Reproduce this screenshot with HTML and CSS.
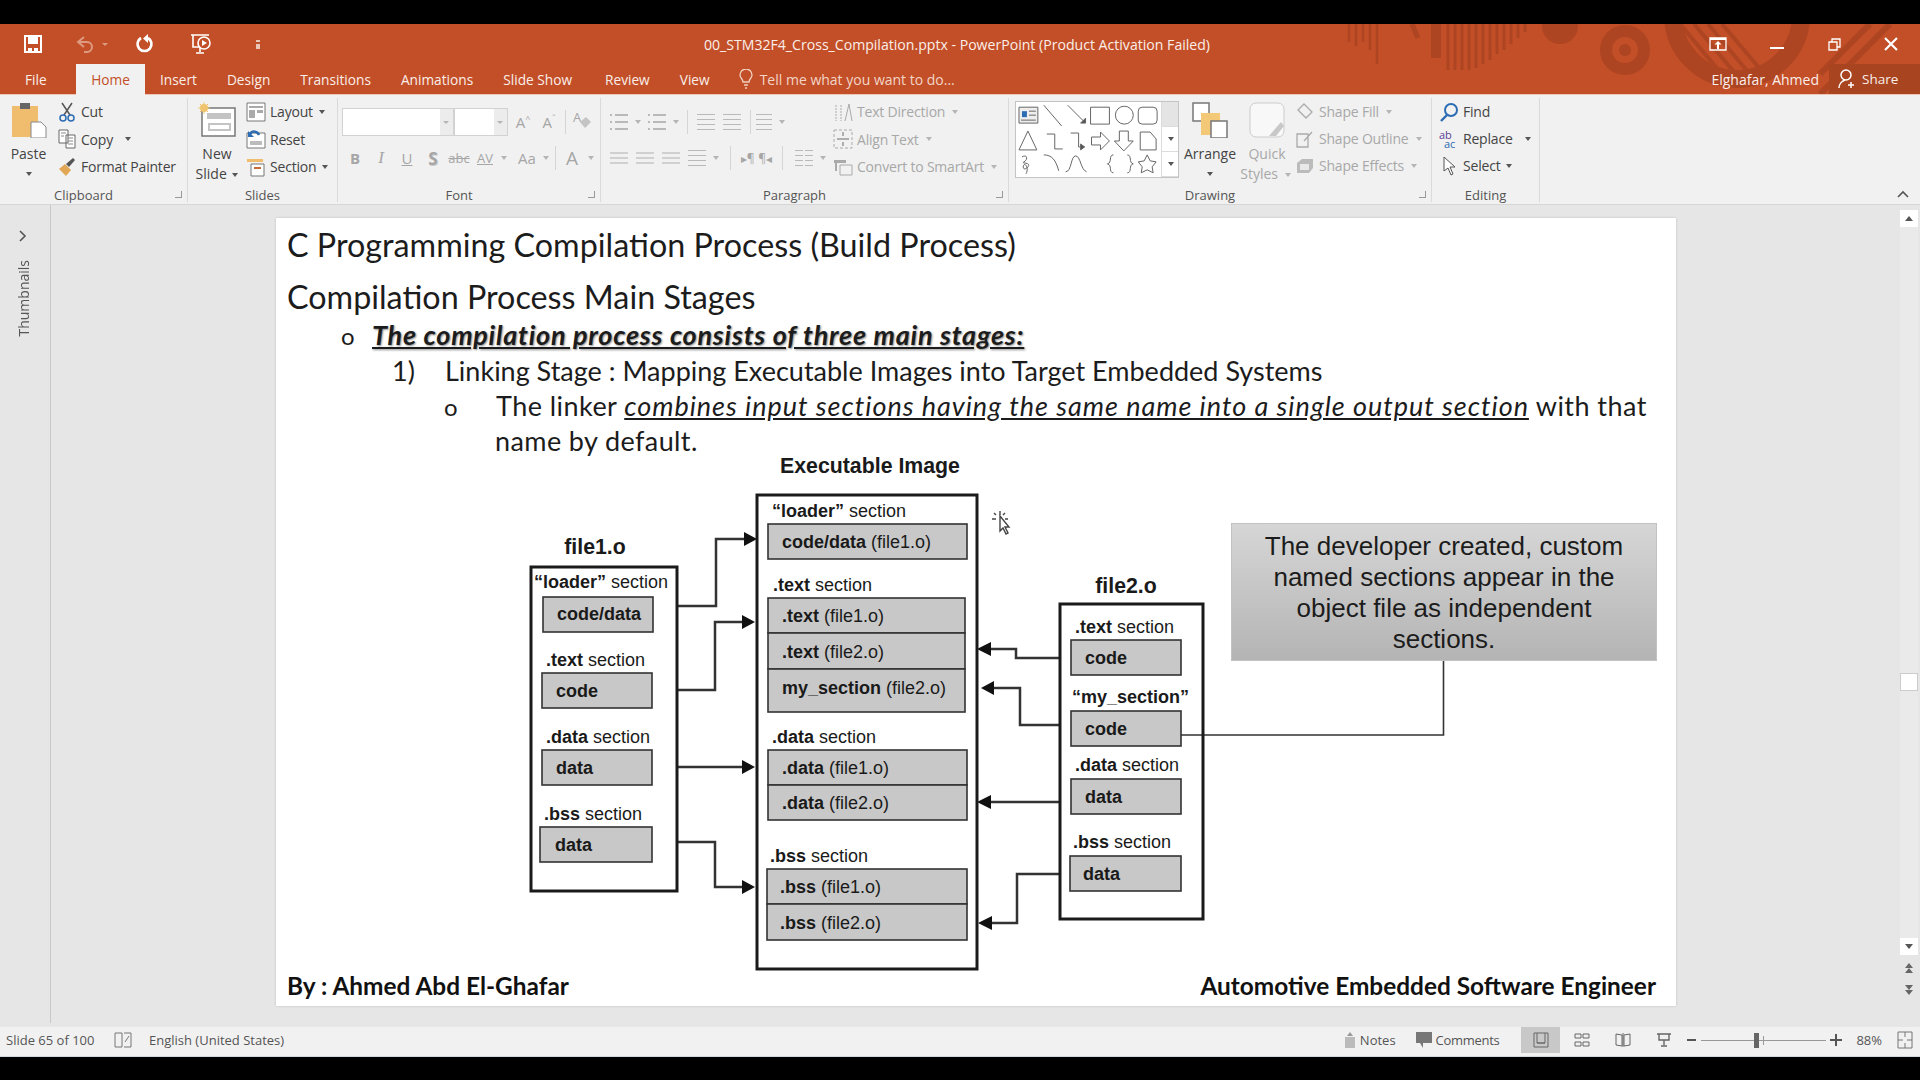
FILE: index.html
```html
<!DOCTYPE html>
<html lang="en">
<head>
  <meta charset="UTF-8" />
  <title>00_STM32F4_Cross_Compilation.pptx - PowerPoint</title>
  <link rel="stylesheet" href="styles.css">
</head>
<body>
  <div class="bar-black top"></div>

  <div class="chrome">
    <!-- Background art behind title bar and tabs, in page coordinates -->
    <svg class="title-art" width="580" height="70" viewBox="1340 24 580 70">
      <g fill="none" stroke="#ae4522">
        <path d="M1349 24v18M1356 24v22M1363 24v18M1370 24v26M1377 24v40" stroke-width="2.500"/>
        <path d="M1412 24l6 14" stroke-width="5"/>
        <path d="M1436 24v34" stroke-width="10"/>
        <path d="M1448 24v46M1455 24v46M1462 24v46M1469 24v46M1476 24v44M1483 24v40M1490 24v36M1497 24v30M1504 24v26M1511 24v20M1518 24v14M1525 24v8" stroke-width="3"/>
        <circle cx="1625" cy="50" r="19" stroke-width="12"/>
        <circle cx="1625" cy="50" r="6" fill="#ae4522" stroke="none"/>
        <circle cx="1737" cy="15" r="64" stroke-width="18"/>
        <path d="M1680 24l50 60M1694 24l50 60M1708 24l50 60M1722 24l44 52" stroke-width="4"/>
        <path d="M1890 24l-70 70M1870 24l-50 50" stroke-width="6"/>
      </g>
      <circle cx="1560" cy="26" r="18" fill="#ae4522"/>
    </svg>

    <!-- Title bar -->
    <header class="titlebar">
      <div class="qat">
        <svg class="qat-save" width="18" height="18" viewBox="0 0 18 18"><path d="M1 1h16v16H1z" fill="none" stroke="#fff" stroke-width="2"/><path d="M4 2h10v7H4zM4 13h4v3H4zM10 13h4v3h-4z" fill="#fff"/></svg>
        <svg class="qat-undo" width="20" height="18" viewBox="0 0 20 18"><path d="M8 2L2 7l6 5M2 7h9a5 5 0 0 1 0 10H8" fill="none" stroke="#de9a80" stroke-width="2"/></svg>
        <span class="caret-tiny faded"></span>
        <svg class="qat-redo" width="20" height="20" viewBox="0 0 20 20"><path d="M7 4a7 7 0 1 0 7 0" fill="none" stroke="#fff" stroke-width="2.600"/><path d="M14 0v9l-5-4.500z" fill="#fff"/></svg>
        <svg class="qat-show" width="24" height="24" viewBox="0 0 24 24"><path d="M2 3h18M4 3v12h14M11 15v5M7 21h8" fill="none" stroke="#fff" stroke-width="1.600"/><circle cx="15" cy="11" r="6" fill="#c24f27" stroke="#fff" stroke-width="1.600"/><path d="M13 8l5 3-5 3z" fill="#fff"/></svg>
        <span class="qat-more"></span>
      </div>
      <div class="doc-title">00_STM32F4_Cross_Compilation.pptx - PowerPoint (Product Activation Failed)</div>
      <div class="win-btns">
        <svg width="18" height="14" viewBox="0 0 18 14"><path d="M1 1h16v12H1z" fill="none" stroke="#fff" stroke-width="1.300"/><path d="M1 1h16v2H1zM9 4l-3.500 3.500H8V12h2V7.500h2.500z" fill="#fff"/></svg>
        <svg width="14" height="16" viewBox="0 0 14 16"><path d="M0 12h14" stroke="#fff" stroke-width="2"/></svg>
        <svg width="14" height="16" viewBox="0 0 14 16"><path d="M2 6h8v8H2zM5 6V3h8v8h-3" fill="none" stroke="#fff" stroke-width="1.300"/></svg>
        <svg width="14" height="16" viewBox="0 0 14 16"><path d="M1 2l12 12M13 2L1 14" stroke="#fff" stroke-width="2.200"/></svg>
      </div>
    </header>

    <!-- Ribbon tabs -->
    <nav class="tabs">
      <a class="tab tab-file">File</a>
      <a class="tab tab-home">Home</a>
      <a class="tab">Insert</a>
      <a class="tab">Design</a>
      <a class="tab">Transitions</a>
      <a class="tab">Animations</a>
      <a class="tab">Slide Show</a>
      <a class="tab tab-review">Review</a>
      <a class="tab">View</a>
      <a class="tell-me">
        <svg width="14" height="20" viewBox="0 0 14 20"><path d="M4 13c0-3-3-4-3-7a6 6 0 0 1 12 0c0 3-3 4-3 7zM5 16h4M6 19h2" fill="none" stroke="#f0d0c0" stroke-width="1.300"/></svg>
        Tell me what you want to do...
      </a>
      <span class="user">Elghafar, Ahmed</span>
      <a class="share">
        <svg width="18" height="20" viewBox="0 0 18 20"><circle cx="8" cy="6" r="5" fill="none" stroke="#fff" stroke-width="1.500"/><path d="M1 19c0-4 3-7 6-8M13 13v6M10 16h6" fill="none" stroke="#fff" stroke-width="1.500"/></svg>
        Share
      </a>
    </nav>
  </div>

  <!-- Ribbon -->
  <section class="ribbon">
    <div class="group g-clipboard">
      <div class="group-body">
        <div class="big">
          <svg width="36" height="36" viewBox="0 0 36 36"><path d="M1 4h26v31H1z" fill="#f0bd6e"/><path d="M9 1h10v6H9z" fill="#666"/><path d="M20 20h10l5 5v11H20z" fill="#fff" stroke="#888"/></svg>
          <span>Paste</span>
          <i class="caret big-caret"></i>
        </div>
        <div class="cmd-col">
          <div class="cmd">
            <svg width="18" height="20" viewBox="0 0 18 20"><path d="M4 1l8 12M14 1L6 13" stroke="#555" stroke-width="1.500"/><circle cx="5" cy="16" r="3" fill="none" stroke="#2b6cb3" stroke-width="1.500"/><circle cx="13" cy="16" r="3" fill="none" stroke="#2b6cb3" stroke-width="1.500"/></svg>
            Cut
          </div>
          <div class="cmd">
            <svg width="18" height="20" viewBox="0 0 18 20"><path d="M1 1h9v13H1zM8 6h9v13H8z" fill="#fff" stroke="#666"/><path d="M3 4h5M3 7h3M10 9h5M10 12h5M10 15h5" stroke="#888"/></svg>
            Copy <i class="caret sp"></i>
          </div>
          <div class="cmd">
            <svg width="18" height="20" viewBox="0 0 18 20"><path d="M1 12l6-5 6 6-5 6z" fill="#e2a755"/><path d="M8 7l7-6 2 2-6 7z" fill="#555"/></svg>
            Format Painter
          </div>
        </div>
      </div>
      <div class="group-label has-launcher">Clipboard<i class="launcher"></i></div>
    </div>

    <div class="group g-slides">
      <div class="group-body">
        <div class="big big-new">
          <svg width="38" height="36" viewBox="0 0 38 36"><path d="M4 6h33v28H4z" fill="#fff" stroke="#777" stroke-width="1.500"/><path d="M9 11h24v6H9z" fill="#c4c4c4"/><path d="M11 22h21v6H11z" fill="none" stroke="#c4c4c4" stroke-width="2"/><circle cx="6" cy="6" r="4" fill="#f0c46e"/><path d="M6 0v12M0 6h12M2 2l8 8M10 2l-8 8" stroke="#f0c46e"/></svg>
          <span>New</span>
          <span>Slide <i class="caret"></i></span>
        </div>
        <div class="cmd-col">
          <div class="cmd">
            <svg width="20" height="20" viewBox="0 0 20 20"><path d="M1 1h18v18H1z" fill="#fff" stroke="#777"/><path d="M3 4h14v2H3zM3 8h6v8H3zM11 8h6v3h-6z" fill="#aaa"/></svg>
            Layout <i class="caret"></i>
          </div>
          <div class="cmd">
            <svg width="20" height="20" viewBox="0 0 20 20"><path d="M1 4h18v15H1z" fill="#fff" stroke="#777"/><path d="M4 12h12v4H4z" fill="#bbb"/><path d="M4 5a5 5 0 0 1 9 1" fill="none" stroke="#2b6cb3" stroke-width="2.500"/><path d="M2 2v6h6z" fill="#2b6cb3"/></svg>
            Reset
          </div>
          <div class="cmd">
            <svg width="20" height="20" viewBox="0 0 20 20"><path d="M5 7h13v12H5z" fill="#fff" stroke="#777"/><path d="M8 11h7" stroke="#c86a3a" stroke-width="2"/><path d="M1 2h16v3H1z" fill="#f0bd6e"/></svg>
            Section <i class="caret"></i>
          </div>
        </div>
      </div>
      <div class="group-label">Slides</div>
    </div>

    <div class="group g-font">
      <div class="group-body font-body">
        <div class="tool-row first">
          <div class="combo w-font"><i class="combo-arrow"></i></div>
          <div class="combo w-size"><i class="combo-arrow"></i></div>
          <span class="tool grow">A<sup>^</sup></span>
          <span class="tool shrink">A<sup>ˇ</sup></span>
          <i class="sep"></i>
          <span class="tool clear">
            <svg width="20" height="22" viewBox="0 0 20 22"><text x="1" y="13" class="icon-a">A</text><path d="M8 13l6-5 5 5-6 6z" fill="#c4c4c4"/></svg>
          </span>
        </div>
        <div class="tool-row second">
          <span class="tool bold">B</span>
          <span class="tool ital">I</span>
          <span class="tool undl">U</span>
          <span class="tool bold shad">S</span>
          <span class="tool strike">abc</span>
          <span class="tool av">AV</span><i class="caret dim"></i>
          <span class="tool aa">Aa</span><i class="caret dim"></i>
          <i class="sep"></i>
          <span class="tool big-a">A</span><i class="caret dim"></i>
        </div>
      </div>
      <div class="group-label has-launcher">Font<i class="launcher"></i></div>
    </div>

    <div class="group g-para">
      <div class="group-body para-body">
        <div class="para-tools">
          <div class="tool-row first">
            <span class="lines-icon bullets"></span><i class="caret dim"></i>
            <span class="lines-icon bullets"></span><i class="caret dim"></i>
            <i class="sep"></i>
            <span class="lines-icon indent"></span>
            <span class="lines-icon indent"></span>
            <i class="sep"></i>
            <span class="lines-icon spacing"></span><i class="caret dim"></i>
          </div>
          <div class="tool-row second">
            <span class="lines-icon al-left"></span>
            <span class="lines-icon al-mid"></span>
            <span class="lines-icon al-right"></span>
            <span class="lines-icon"></span><i class="caret dim"></i>
            <i class="sep"></i>
            <span class="para-mark">▸¶</span>
            <span class="para-mark">¶◂</span>
            <i class="sep"></i>
            <span class="lines-icon cols"></span><i class="caret dim"></i>
          </div>
        </div>
        <div class="cmd-col off">
          <div class="cmd">
            <svg width="20" height="22" viewBox="0 0 20 22"><path d="M3 4v16M8 4v16" stroke="#aaa" stroke-dasharray="2 1"/><path d="M12 20L16 3l3 17" fill="none" stroke="#aaa"/></svg>
            Text Direction <i class="caret dim"></i>
          </div>
          <div class="cmd">
            <svg width="20" height="20" viewBox="0 0 20 20"><path d="M1 1h18v18H1z" fill="none" stroke="#aaa" stroke-dasharray="3 2"/><path d="M4 10h12M10 3v4M10 13v4" stroke="#999" stroke-width="1.500"/></svg>
            Align Text <i class="caret dim"></i>
          </div>
          <div class="cmd">
            <svg width="20" height="20" viewBox="0 0 20 20"><path d="M1 3h12v3H1z" fill="#aaa"/><path d="M7 8h12v10H7z" fill="none" stroke="#aaa"/><path d="M3 6v8" stroke="#aaa" stroke-width="2"/></svg>
            Convert to SmartArt <i class="caret dim"></i>
          </div>
        </div>
      </div>
      <div class="group-label has-launcher">Paragraph<i class="launcher"></i></div>
    </div>

    <div class="group g-draw">
      <div class="group-body draw-body">
        <div class="gallery">
          <svg width="146" height="75" viewBox="0 0 146 75" fill="none" stroke="#666" stroke-width="1">
            <path d="M3 5h19v16H3z" fill="#eee"/><path d="M6 9h5v6H6z" fill="#2b6cb3" stroke="none"/><path d="M13 9h7M13 13h7M5 18h15"/>
            <path d="M28 3l18 21M52 3l18 18"/><path d="M70 21l-5 0 5-5z" fill="#555"/>
            <path d="M75 5h19v17H75z"/><circle cx="109" cy="13" r="9"/><rect x="123" y="5" width="19" height="17" rx="4"/>
            <path d="M12 29L3 48h18zM31 32h8v15h8M55 31h8v14h6"/><path d="M69 45l-4-3v6z" fill="#555"/>
            <path d="M76 35h9v-5l9 9-9 9v-5h-9zM104 29h9v10h5l-9.500 10-9.500-10h5zM125 30h10l6 7v11h-16z"/>
            <path d="M6 55c6-3 6 3 2 5s8 0 4 5-6 0-4-2 5 5 2 9M28 53c8 0 12 5 15 16"/>
            <path d="M50 70c6 0 5-16 10-16s5 14 11 16M98 53c-5 0-1 8-6 9 5 1 1 9 6 9M112 53c5 0 1 8 6 9-5 1-1 9-6 9"/>
            <path d="M132 53l3 6 6 1-4 5 1 6-6-3-6 3 1-6-4-5 6-1z"/>
          </svg>
          <div class="gallery-scroll">
            <span class="up"></span><span class="down"><i class="caret"></i></span><span class="more"><i class="caret"></i></span>
          </div>
        </div>
        <div class="big big-arrange">
          <svg width="36" height="36" viewBox="0 0 36 36"><path d="M1 1h16v18H1z" fill="#fff" stroke="#777" stroke-width="1.500"/><path d="M9 11h19v22H9z" fill="#f3c877"/><path d="M19 19h16v17H19z" fill="#fff" stroke="#777" stroke-width="1.500"/></svg>
          <span>Arrange</span>
          <i class="caret big-caret"></i>
        </div>
        <div class="big big-quick off">
          <svg width="36" height="36" viewBox="0 0 36 36"><rect x="1" y="1" width="34" height="34" rx="6" fill="#f8f8f8" stroke="#ccc"/><path d="M20 34l12-14 3 4-8 10z" fill="#c8c8c8"/></svg>
          <span>Quick</span>
          <span>Styles <i class="caret dim"></i></span>
        </div>
        <div class="cmd-col off shape-col">
          <div class="cmd">
            <svg width="18" height="18" viewBox="0 0 18 18"><path d="M8 1l8 8-6 6-8-8z" fill="none" stroke="#aaa" stroke-width="1.300"/></svg>
            Shape Fill <i class="caret dim"></i>
          </div>
          <div class="cmd">
            <svg width="18" height="18" viewBox="0 0 18 18"><path d="M1 4h11v13H1zM8 11l8-9" fill="none" stroke="#aaa" stroke-width="1.300"/></svg>
            Shape Outline <i class="caret dim"></i>
          </div>
          <div class="cmd">
            <svg width="18" height="18" viewBox="0 0 18 18"><path d="M1 6l5-4h11v9l-4 5H1z" fill="#bbb"/><path d="M4 7h9v6H4z" fill="#e8e8e8"/></svg>
            Shape Effects <i class="caret dim"></i>
          </div>
        </div>
      </div>
      <div class="group-label has-launcher">Drawing<i class="launcher"></i></div>
    </div>

    <div class="group g-edit">
      <div class="group-body">
        <div class="cmd-col edit-col">
          <div class="cmd">
            <svg width="18" height="20" viewBox="0 0 18 20"><circle cx="11" cy="8" r="6" fill="none" stroke="#2b6cb3" stroke-width="2"/><path d="M7 13l-6 6" stroke="#2b6cb3" stroke-width="2.400"/></svg>
            Find
          </div>
          <div class="cmd">
            <span class="replace-icon"><b>ab</b><b class="ac">ac</b></span>
            Replace <i class="caret sp"></i>
          </div>
          <div class="cmd">
            <svg width="18" height="20" viewBox="0 0 18 20"><path d="M4 1v14l4-3 3 7 2-1-3-7h5z" fill="#fff" stroke="#555"/></svg>
            Select <i class="caret"></i>
          </div>
        </div>
      </div>
      <div class="group-label">Editing</div>
    </div>

    <svg class="collapse" width="12" height="8" viewBox="0 0 12 8"><path d="M1 7l5-5 5 5" fill="none" stroke="#555" stroke-width="1.600"/></svg>
  </section>

  <!-- Work area -->
  <main class="workspace">
    <aside class="thumbs">
      <svg width="8" height="12" viewBox="0 0 8 12"><path d="M1 1l5 5-5 5" fill="none" stroke="#555" stroke-width="1.600"/></svg>
      <span class="thumbs-text">Thumbnails</span>
    </aside>

    <div class="stage">
      <article class="slide">
        <h1 class="slide-title">C Programming Compilation Process (Build Process)</h1>
        <h2 class="slide-sub">Compilation Process Main Stages</h2>
        <p class="lvl1"><span class="bullet">o</span><b class="lead">The compilation process consists of three main stages:</b></p>
        <p class="lvl2"><span class="num">1)</span>Linking Stage : Mapping Executable Images into Target Embedded Systems</p>
        <p class="lvl3"><span class="bullet">o</span>The linker <em class="uline">combines input sections having the same name into a single output section</em> with that</p>
        <p class="lvl3 cont">name by default.</p>

        <!-- Diagram uses page coordinates through its viewBox -->
        <svg class="diagram" width="1400" height="788" viewBox="276 218 1400 788">
          <g class="wires">
            <path d="M677 606H716V539H746"/>
            <path d="M677 690H715V622H744"/>
            <path d="M677 767H744"/>
            <path d="M677 842H715V887H744"/>
            <path d="M1060 658H1016V649H990"/>
            <path d="M1060 725H1020V688H993"/>
            <path d="M1060 802H990"/>
            <path d="M1060 874H1017V923H990"/>
          </g>
          <path class="lead-line" d="M1181 735H1443.500V661"/>
          <g class="heads">
            <path d="M757 539l-13-7v14z"/>
            <path d="M755 622l-13-7v14z"/>
            <path d="M755 767l-13-7v14z"/>
            <path d="M755 887l-13-7v14z"/>
            <path d="M977 649l14-7v14z"/>
            <path d="M981 688l13-7v14z"/>
            <path d="M977 802l14-7v14z"/>
            <path d="M978 923l14-7v14z"/>
          </g>

          <g class="frames">
            <rect x="531" y="567" width="146" height="324"/>
            <rect x="757" y="495" width="220" height="474"/>
            <rect x="1060" y="604" width="143" height="315"/>
          </g>

          <g class="cells">
            <rect x="543" y="597" width="110" height="35"/>
            <rect x="542" y="673" width="110" height="35"/>
            <rect x="542" y="750" width="110" height="35"/>
            <rect x="540" y="827" width="112" height="35"/>
            <rect x="768" y="524" width="199" height="35"/>
            <rect x="768" y="598" width="197" height="35"/>
            <rect x="768" y="633" width="197" height="36"/>
            <rect x="768" y="669" width="197" height="43"/>
            <rect x="768" y="750" width="199" height="35"/>
            <rect x="768" y="785" width="199" height="35"/>
            <rect x="767" y="869" width="200" height="35"/>
            <rect x="767" y="904" width="200" height="36"/>
            <rect x="1071" y="640" width="110" height="35"/>
            <rect x="1071" y="711" width="110" height="35"/>
            <rect x="1071" y="779" width="110" height="35"/>
            <rect x="1070" y="856" width="111" height="35"/>
          </g>

          <text class="head" x="870" y="473" text-anchor="middle">Executable Image</text>
          <text class="head" x="595" y="554" text-anchor="middle">file1.o</text>
          <text class="head" x="1126" y="593" text-anchor="middle">file2.o</text>

          <text x="534" y="588"><tspan class="b">“loader”</tspan> section</text>
          <text class="b" x="557" y="620">code/data</text>
          <text x="546" y="666"><tspan class="b">.text</tspan> section</text>
          <text class="b" x="556" y="697">code</text>
          <text x="546" y="743"><tspan class="b">.data</tspan> section</text>
          <text class="b" x="556" y="774">data</text>
          <text x="544" y="820"><tspan class="b">.bss</tspan> section</text>
          <text class="b" x="555" y="851">data</text>

          <text x="772" y="517"><tspan class="b">“loader”</tspan> section</text>
          <text x="782" y="548"><tspan class="b">code/data</tspan> (file1.o)</text>
          <text x="773" y="591"><tspan class="b">.text</tspan> section</text>
          <text x="782" y="622"><tspan class="b">.text</tspan> (file1.o)</text>
          <text x="782" y="658"><tspan class="b">.text</tspan> (file2.o)</text>
          <text x="782" y="694"><tspan class="b">my_section</tspan> (file2.o)</text>
          <text x="772" y="743"><tspan class="b">.data</tspan> section</text>
          <text x="782" y="774"><tspan class="b">.data</tspan> (file1.o)</text>
          <text x="782" y="809"><tspan class="b">.data</tspan> (file2.o)</text>
          <text x="770" y="862"><tspan class="b">.bss</tspan> section</text>
          <text x="780" y="893"><tspan class="b">.bss</tspan> (file1.o)</text>
          <text x="780" y="929"><tspan class="b">.bss</tspan> (file2.o)</text>

          <text x="1075" y="633"><tspan class="b">.text</tspan> section</text>
          <text class="b" x="1085" y="664">code</text>
          <text class="b" x="1072" y="703">“my_section”</text>
          <text class="b" x="1085" y="735">code</text>
          <text x="1075" y="771"><tspan class="b">.data</tspan> section</text>
          <text class="b" x="1085" y="803">data</text>
          <text x="1073" y="848"><tspan class="b">.bss</tspan> section</text>
          <text class="b" x="1083" y="880">data</text>

          <!-- Mouse pointer left in the recording -->
          <g class="pointer">
            <path d="M1000 511v4M992 519h4M1005 519h3M994 513l2 2M1005 513l-2 2" />
            <path class="arrow" d="M1000 516v15l3-3 3 6 2-1-3-6h4z"/>
          </g>
        </svg>

        <div class="callout">The developer created, custom named sections appear in the object file as independent sections.</div>

        <footer class="slide-foot">
          <b>By : Ahmed Abd El-Ghafar</b>
          <b>Automotive Embedded Software Engineer</b>
        </footer>
      </article>
    </div>

    <aside class="vscroll">
      <span class="vbtn"><i class="tri-up"></i></span>
      <span class="vtrack"><span class="vthumb"></span></span>
      <span class="vbtn"><i class="tri-down"></i></span>
      <span class="vjump">
        <svg width="12" height="12" viewBox="0 0 12 12"><path d="M6 0l4 5H2zM6 5l4 5H2z" fill="#666"/></svg>
        <svg width="12" height="12" viewBox="0 0 12 12"><path d="M6 12l4-5H2zM6 7l4-5H2z" fill="#666"/></svg>
      </span>
    </aside>
  </main>

  <!-- Status bar -->
  <footer class="statusbar">
    <span class="st-slide">Slide 65 of 100</span>
    <svg class="st-book" width="18" height="16" viewBox="0 0 18 16"><path d="M1 1h7v14H1zM10 1h7M10 15h7M17 1v14M11 10l4-6" fill="none" stroke="#777"/></svg>
    <span>English (United States)</span>
    <span class="st-right">
      <span class="st-item">
        <svg width="12" height="18" viewBox="0 0 12 18"><path d="M6 1l3 4H3z" fill="#999"/><path d="M1 6h10v11H1z" fill="#bbb"/></svg>
        Notes
      </span>
      <span class="st-item st-comments">
        <svg width="16" height="18" viewBox="0 0 16 18"><path d="M0 1h16v11H7v5l-3-5H0z" fill="#777"/></svg>
        Comments
      </span>
      <span class="view-btn on"><svg width="16" height="16" viewBox="0 0 16 16"><path d="M1 1h14v14H1zM4 1v10h8V1M4 11h8" fill="none" stroke="#666"/></svg></span>
      <span class="view-btn"><svg width="16" height="16" viewBox="0 0 16 16"><path d="M1 2h6v4H1zM9 2h6v4H9zM1 10h6v4H1zM9 10h6v4H9z" fill="none" stroke="#666"/></svg></span>
      <span class="view-btn"><svg width="16" height="16" viewBox="0 0 16 16"><path d="M1 2l6 1v11l-6-1zM15 2L9 3v11l6-1zM8 1v14" fill="none" stroke="#666"/></svg></span>
      <span class="view-btn"><svg width="16" height="16" viewBox="0 0 16 16"><path d="M1 2h14M3 2v6h10V2M8 8v5M5 14h6" fill="none" stroke="#666" stroke-width="1.400"/></svg></span>
      <span class="zoom-minus"></span>
      <span class="zoom-track"><i class="zoom-tick"></i><i class="zoom-thumb"></i></span>
      <span class="zoom-plus"></span>
      <span class="zoom-val">88%</span>
      <svg class="st-fit" width="16" height="18" viewBox="0 0 16 18"><path d="M1 1h14v16H1zM8 1v5M8 12v5M1 9h5M10 9h5" fill="none" stroke="#777"/></svg>
    </span>
  </footer>
  <div class="bar-black bottom"></div>
</body>
</html>
```

FILE: styles.css
```css
/* Page frame */
html, body {
  margin: 0;
  height: 100%;
}

body {
  width: 1920px;
  height: 1080px;
  overflow: hidden;
  display: flex;
  flex-direction: column;
  background: #000;
  font-family: "Open Sans", "Noto Sans", sans-serif;
  font-size: 13.5px;
  color: #444;
}

.bar-black.top { height: 24px; }
.bar-black.bottom { height: 24px; border-top: 1px solid #cfd6dc; box-sizing: border-box; }

/* Orange chrome: title bar + tabs */
.chrome {
  position: relative;
  background: #c24f27;
  flex-shrink: 0;
  overflow: hidden;
}

.title-art {
  position: absolute;
  left: 1340px;
  top: 0;
}

/* Title bar */
.titlebar {
  position: relative;
  height: 40px;
  display: flex;
  align-items: center;
  color: #fff;
}

.qat {
  position: relative;
  display: flex;
  align-items: center;
  padding-left: 24px;
  width: 480px;
  box-sizing: border-box;
}

.qat-undo { margin-left: 34px; }
.caret-tiny.faded {
  margin-left: 6px;
  border: 3px solid transparent;
  border-top: 3px solid #de9a80;
  border-bottom: 0;
}
.qat-redo { margin-left: 26px; }
.qat-show { margin-left: 35px; }
.qat-more {
  margin-left: 43px;
  width: 4px;
  height: 9px;
  background: linear-gradient(#e9c6b8 2px, transparent 2px, transparent 4px, #e9c6b8 4px);
}

.doc-title {
  position: relative;
  width: 960px;
  margin-left: -3px;
  text-align: center;
  font-size: 14.1px;
  color: #fbeee9;
}

.win-btns {
  position: relative;
  display: flex;
  align-items: center;
  margin-left: auto;
  gap: 43px;
  padding-right: 22px;
}

/* Tabs */
.tabs {
  position: relative;
  height: 31px;
  display: flex;
  align-items: stretch;
  color: #fbeee9;
  border-bottom: 1px solid #ecc6b6;
  box-sizing: border-box;
}

.tab {
  padding: 0 15px;
  display: flex;
  align-items: center;
  font-size: 13.7px;
}

.tab-file { width: 76px; padding: 0 0 0 25px; box-sizing: border-box; }

.tab-home {
  width: 69px;
  box-sizing: border-box;
  justify-content: center;
  padding: 0;
  background: #f1f1f1;
  color: #c24f27;
  height: 31px;
}

.tab-review { margin-left: 3px; }

.tell-me {
  display: flex;
  align-items: center;
  gap: 7px;
  margin-left: 14px;
  font-size: 14px;
  color: #f3d5c8;
}

.user {
  margin-left: auto;
  align-self: center;
  font-size: 14px;
  padding-right: 10px;
}

.share {
  width: 91px;
  box-sizing: border-box;
  display: flex;
  align-items: center;
  gap: 6px;
  padding-left: 9px;
  background: #a8441f;
  font-size: 13.5px;
}

/* Ribbon */
.ribbon {
  position: relative;
  height: 110px;
  display: flex;
  flex-shrink: 0;
  background: #f1f1f1;
  border-bottom: 1px solid #d6d6d6;
  box-sizing: border-box;
}

.group {
  display: flex;
  flex-direction: column;
  border-right: 1px solid #dadada;
  box-sizing: border-box;
  margin: 3px 0 2px;
}

.g-clipboard { width: 188px; }
.g-slides { width: 150px; }
.g-font { width: 263px; }
.g-para { width: 408px; }
.g-draw { width: 423px; }
.g-edit { width: 108px; }

.group-body {
  flex: 1;
  display: flex;
  min-height: 0;
}

.group-label {
  position: relative;
  height: 16px;
  line-height: 18px;
  text-align: center;
  font-size: 13px;
  color: #555;
}

.group-label.has-launcher { padding-right: 20px; }

.launcher {
  position: absolute;
  right: 5px;
  top: 5px;
  width: 6px;
  height: 6px;
  border-left: 1px solid #999;
  border-bottom: 1px solid #999;
  transform: scaleX(-1);
}

.big {
  display: flex;
  flex-direction: column;
  align-items: center;
  font-size: 14px;
  line-height: 19.5px;
  color: #444;
  width: 57px;
  flex-shrink: 0;
  padding-top: 4px;
  box-sizing: border-box;
}

.big svg { margin-bottom: 6px; flex-shrink: 0; }
.big span { flex-shrink: 0; }
.big .big-caret { margin: 8px 0 0; }

.big-new { width: 58px; }
.big-arrange { width: 62px; }
.big-quick { width: 58px; margin-left: -3px; }

.cmd-col {
  display: flex;
  flex-direction: column;
}

.cmd {
  height: 27.5px;
  display: flex;
  align-items: center;
  gap: 4px;
  white-space: nowrap;
  font-size: 14px;
  letter-spacing: -0.2px;
}

.cmd svg { width: 20px; flex-shrink: 0; }

.off, .off .cmd { color: #a8a8a8; }
.para-body .off { padding-left: 4px; }

.caret {
  display: inline-block;
  width: 0;
  height: 0;
  border: 3px solid transparent;
  border-top: 4px solid #555;
  border-bottom: 0;
  vertical-align: middle;
  margin-left: 2px;
  align-self: center;
}
.caret.sp { margin-left: 8px; }
.caret.dim { border-top-color: #b5b5b5; margin: 0 3px 0 3px; }

/* Font + paragraph tools */
.font-body, .para-tools {
  flex-direction: column;
  display: flex;
  flex: 1;
}
.para-tools { flex: none; width: 228px; }
.para-body { flex-direction: row; }

.tool-row {
  display: flex;
  align-items: center;
  color: #a6a6a6;
}
.font-body .tool-row { padding-left: 4px; }
.para-tools .tool-row { padding-left: 5px; }
.tool-row.first { height: 36px; margin-top: 6px; }
.tool-row.second { height: 36px; margin-top: 0; }

.combo {
  position: relative;
  height: 28px;
  background: #fff;
  border: 1px solid #d2d2d2;
  box-sizing: border-box;
  flex-shrink: 0;
}
.w-font { width: 112px; }
.w-size { width: 54px; margin-right: 2px; }
.combo-arrow {
  position: absolute;
  right: 0;
  top: 0;
  bottom: 0;
  width: 13px;
  background: #ececec;
}
.combo-arrow::after {
  content: "";
  position: absolute;
  left: 3px;
  top: 12px;
  border: 3px solid transparent;
  border-top: 3px solid #b5b5b5;
  border-bottom: 0;
}

.tool {
  width: 26px;
  text-align: center;
  font-size: 15px;
  flex-shrink: 0;
}
.tool sup { font-size: 9px; line-height: 0; }
.icon-a { font-size: 13px; fill: #a6a6a6; }
.sep {
  width: 1px;
  height: 24px;
  margin: 0 3px;
  background: #d5d5d5;
  flex-shrink: 0;
}
.para-tools .sep { margin: 0 5px; }
.para-tools .second .sep { margin: 0 8px; }
.bold { font-weight: 700; }
.ital { font-style: italic; font-family: "Liberation Serif", serif; font-size: 17px; }
.undl { text-decoration: underline; }
.shad { font-size: 17px; text-shadow: 1px 1px 0 #ccc; }
.strike { text-decoration: line-through; font-size: 13px; }
.av { font-size: 13px; text-decoration: underline; }
.aa { margin-left: 4px; }
.big-a { font-size: 19px; }

.lines-icon {
  width: 18px;
  height: 16px;
  margin: 0 4px;
  flex-shrink: 0;
  background: repeating-linear-gradient(#b9b9b9 0 1px, transparent 1px 5px);
}
.bullets { background: repeating-linear-gradient(90deg, #b9b9b9 0 2px, transparent 2px 5px, #b9b9b9 5px 18px) ; -webkit-mask: repeating-linear-gradient(#000 0 2px, transparent 2px 7px); }
.indent { width: 18px; }
.spacing { width: 16px; margin-left: 0; }
.al-left, .al-mid, .al-right { height: 12px; background: repeating-linear-gradient(#d0d0d0 0 2px, transparent 2px 5px); }
.cols { width: 18px; background: repeating-linear-gradient(90deg, transparent 0 8px, #f1f1f1 8px 10px), repeating-linear-gradient(#b9b9b9 0 1px, transparent 1px 5px); }
.para-mark { width: 26px; text-align: center; font-size: 12px; }

/* Drawing */
.gallery {
  margin: 3px 0 0 6px;
  width: 164px;
  height: 77px;
  display: flex;
  background: #fff;
  border: 1px solid #c4c4c4;
  box-sizing: border-box;
  flex-shrink: 0;
}
.gallery-scroll {
  width: 16px;
  margin-left: auto;
  display: flex;
  flex-direction: column;
  border-left: 1px solid #dcdcdc;
}
.gallery-scroll span {
  flex: 1;
  display: flex;
  align-items: center;
  justify-content: center;
  background: #fff;
  border-bottom: 1px solid #dcdcdc;
}
.gallery-scroll .up { background: #e4e4e4; }
.shape-col { margin-left: -1px; }
.shape-col .cmd, .edit-col .cmd { height: 27px; }
.edit-col { padding-left: 7px; }

.replace-icon {
  width: 20px;
  display: flex;
  flex-direction: column;
  line-height: 9px;
  font-size: 11px;
}
.replace-icon b { font-weight: 400; color: #5b3e96; }
.replace-icon .ac { margin-left: 5px; color: #2b6cb3; }

.collapse {
  position: absolute;
  right: 11px;
  bottom: 6px;
}

/* Work area */
.workspace {
  flex: 1;
  min-height: 0;
  display: flex;
  background: #e6e6e6;
}

.thumbs {
  width: 51px;
  box-sizing: border-box;
  border-right: 1px solid #c8c8c8;
  display: flex;
  flex-direction: column;
  align-items: center;
  padding-top: 25px;
  padding-right: 4px;
  flex-shrink: 0;
  margin-bottom: 4px;
}

.thumbs-text {
  margin-top: 18px;
  writing-mode: vertical-rl;
  transform: rotate(180deg);
  font-size: 14px;
  color: #555;
}

.stage {
  flex: 1;
  padding: 13px 0 0 225px;
}

/* Slide */
.slide {
  position: relative;
  width: 1400px;
  height: 788px;
  box-sizing: border-box;
  padding: 0 20px 0 11px;
  display: flex;
  flex-direction: column;
  background: #fff;
  font-family: Lato, "Open Sans", sans-serif;
  color: #1c1c1c;
  box-shadow: 0 0 2px #bbb;
}

.slide-title, .slide-sub {
  margin: 0;
  font-weight: 400;
  font-size: 32.3px;
  line-height: 44px;
}
.slide-title { margin-top: 5px; }
.slide-sub { margin-top: 8px; }

.lvl1, .lvl2, .lvl3 {
  margin: 0;
  font-size: 27px;
  white-space: nowrap;
}

.lvl1 { padding-left: 54px; line-height: 36px; margin-top: -2px; letter-spacing: 0.76px; }
.lvl2 { padding-left: 105px; line-height: 34px; }
.lvl3 { padding-left: 157px; line-height: 35px; letter-spacing: 0.45px; }
.lvl3.cont { padding-left: 208px; letter-spacing: 0.4px; margin-top: -1px; }

.bullet {
  display: inline-block;
  width: 31px;
  font-size: 24px;
}
.lvl3 .bullet { width: 52px; }
.num { display: inline-block; width: 53px; }

.lead {
  font-style: italic;
  text-decoration: underline;
  text-shadow: 1px 1px 2px rgba(0, 0, 0, 0.45);
}

.uline {
  text-decoration: underline;
  font-style: italic;
  letter-spacing: 0.97px;
}

.diagram {
  position: absolute;
  left: 0;
  top: 0;
  font-family: "Liberation Sans", Arial, sans-serif;
  font-size: 18px;
  fill: #1a1a1a;
}
.diagram .head { font-size: 21.3px; font-weight: 700; }
.diagram .b { font-weight: 700; }
.wires path { fill: none; stroke: #333; stroke-width: 2.5; }
.lead-line { fill: none; stroke: #333; stroke-width: 1.6; }
.heads path { fill: #111; }
.frames rect { fill: none; stroke: #1a1a1a; stroke-width: 3; }
.cells rect { fill: #c8c8c8; stroke: #333; stroke-width: 1.6; }
.pointer path { fill: none; stroke: #444; stroke-width: 1.4; }
.pointer .arrow { fill: #fff; }

.callout {
  position: absolute;
  left: 955px;
  top: 305px;
  width: 426px;
  height: 138px;
  box-sizing: border-box;
  padding: 7px 30px 0;
  background: linear-gradient(#d6d6d6, #b4b4b4);
  border: 1px solid #c2c2c2;
  font-family: "Liberation Sans", Arial, sans-serif;
  font-size: 26px;
  line-height: 31px;
  text-align: center;
  color: #1c1c1c;
}

.slide-foot {
  position: relative;
  margin-top: auto;
  padding-bottom: 4px;
  display: flex;
  justify-content: space-between;
  font-size: 24.4px;
  line-height: 32px;
  color: #111;
}

/* Scroll bar */
.vscroll {
  width: 22px;
  padding: 5px 2px 0 2px;
  box-sizing: border-box;
  display: flex;
  flex-direction: column;
  flex-shrink: 0;
  height: 790px;
}
.vbtn {
  height: 17px;
  flex-shrink: 0;
  background: #fff;
  display: flex;
  align-items: center;
  justify-content: center;
}
.tri-up, .tri-down { border: 4px solid transparent; }
.tri-up { border-bottom: 5px solid #555; border-top: 0; }
.tri-down { border-top: 5px solid #555; border-bottom: 0; }
.vtrack {
  flex: 1;
  background: #eaeaea;
  padding-top: 446px;
}
.vthumb {
  display: block;
  height: 18px;
  background: #fff;
  border: 1px solid #ccc;
  box-sizing: border-box;
}
.vjump {
  display: flex;
  flex-direction: column;
  align-items: center;
  gap: 8px;
  margin-top: 8px;
}

/* Status bar */
.statusbar {
  height: 29px;
  box-sizing: border-box;
  display: flex;
  align-items: center;
  flex-shrink: 0;
  background: #f1f1f1;
  padding: 0 0 3px 6px;
  font-size: 13px;
  color: #555;
}

.st-slide { width: 107px; }
.st-book { width: 36px; margin-left: -8px; margin-right: 8px; }
.st-right {
  display: flex;
  align-items: center;
  margin-left: auto;
  height: 100%;
}
.st-item { display: flex; align-items: center; gap: 4px; margin-right: 20px; }
.st-comments { margin-right: 22px; letter-spacing: -0.3px; }

.view-btn {
  width: 39px;
  height: 100%;
  display: flex;
  align-items: center;
  justify-content: center;
  margin-right: 2px;
}
.view-btn.on { background: #c8c8c8; }
.zoom-minus { width: 9px; height: 2px; background: #555; margin: 0 5px 0 2px; }
.zoom-track {
  position: relative;
  width: 125px;
  height: 1px;
  background: #999;
}
.zoom-tick { position: absolute; left: 62px; top: -4px; width: 1px; height: 9px; background: #999; }
.zoom-thumb { position: absolute; left: 53px; top: -7px; width: 5px; height: 15px; background: #666; }
.zoom-plus {
  width: 12px;
  height: 12px;
  margin-left: 4px;
  background: linear-gradient(#555, #555) center / 12px 2px no-repeat, linear-gradient(#555, #555) center / 2px 12px no-repeat;
}
.zoom-val { margin: 0 15px 0 14px; }
.st-fit { margin-right: 7px; }
```
